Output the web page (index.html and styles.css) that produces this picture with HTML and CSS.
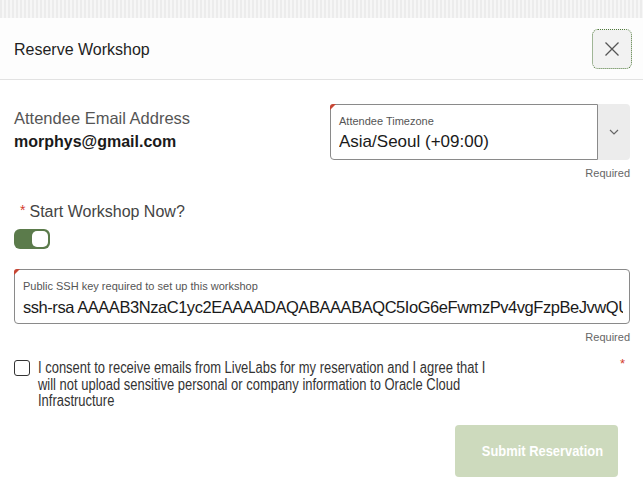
FILE: index.html
```html
<!DOCTYPE html>
<html>
<head>
<meta charset="utf-8">
<link rel="stylesheet" href="styles.css">
</head>
<body>
<div class="backdrop"></div>
<div class="dialog">
  <div class="header">
    <h1 class="title">Reserve Workshop</h1>
    <button class="close" aria-label="Close">
      <svg width="16" height="16" viewBox="0 0 16 16"><path d="M1.5 1.5L14.5 14.5M14.5 1.5L1.5 14.5" stroke="#555" stroke-width="1.3" fill="none"/></svg>
    </button>
  </div>
  <div class="body">
    <div class="row-top">
      <div class="email">
        <div class="email-label">Attendee Email Address</div>
        <div class="email-value">morphys@gmail.com</div>
      </div>
      <div class="tz-wrap">
        <div class="tz">
          <div class="field tz-field">
            <span class="corner"></span>
            <div class="field-label">Attendee Timezone</div>
            <div class="field-value">Asia/Seoul (+09:00)</div>
          </div>
          <div class="tz-btn">
            <svg width="12" height="8" viewBox="0 0 12 8"><path d="M2 2L6 6L10 2" stroke="#666" stroke-width="1.2" fill="none"/></svg>
          </div>
        </div>
        <div class="required">Required</div>
      </div>
    </div>
    <div class="start">
      <div class="start-label"><span class="ast">*</span>Start Workshop Now?</div>
      <div class="toggle"><span class="knob"></span></div>
    </div>
    <div class="ssh">
      <div class="field ssh-field">
        <span class="corner"></span>
        <div class="field-label">Public SSH key required to set up this workshop</div>
        <div class="field-value ssh-value">ssh-rsa AAAAB3NzaC1yc2EAAAADAQABAAABAQC5IoG6eFwmzPv4vgFzpBeJvwQU</div>
      </div>
      <div class="required">Required</div>
    </div>
    <div class="consent">
      <span class="checkbox"></span>
      <p class="consent-text">I consent to receive emails from LiveLabs for my reservation and I agree that I will not upload sensitive personal or company information to Oracle Cloud Infrastructure</p>
      <span class="consent-ast">*</span>
    </div>
    <div class="actions">
      <button class="submit"><span class="submit-text">Submit Reservation</span></button>
    </div>
  </div>
</div>
</body>
</html>
```
FILE: styles.css
```css
html, body {
  margin: 0;
  padding: 0;
  background: #ffffff;
  width: 643px;
  height: 495px;
  overflow: hidden;
  font-family: "Liberation Sans", Arial, sans-serif;
}
.backdrop {
  height: 18px;
  background: repeating-linear-gradient(90deg, #ececec 0 2px, #f6f6f6 2px 4px);
}
.dialog {
  background: #fff;
}
.header {
  height: 61px;
  display: flex;
  align-items: center;
  justify-content: space-between;
  padding: 0 11px 0 14px;
  border-bottom: 1px solid #e2e2e2;
  background: #fdfdfd;
}
.title {
  margin: 0;
  font-size: 16px;
  font-weight: normal;
  color: #1f1f1f;
  padding-top: 2px;
}
.close {
  width: 40px;
  height: 40px;
  border: 1px dotted #4f7a3a;
  border-radius: 6px;
  background: #f2f2f2;
  display: flex;
  align-items: center;
  justify-content: center;
  padding: 0;
  margin-top: 1px;
}
.body {
  padding: 24px 13px 0 14px;
}
.row-top {
  display: flex;
  justify-content: space-between;
}
.email {
  padding-top: 3px;
}
.email-label {
  font-size: 16.5px;
  color: #555;
  line-height: 22px;
}
.email-value {
  font-size: 16px;
  font-weight: bold;
  color: #1a1a1a;
  line-height: 26px;
}
.tz-wrap {
  width: 300px;
}
.tz {
  display: flex;
  height: 56px;
}
.field {
  position: relative;
  border: 1px solid #8a8a8a;
  border-radius: 4px;
  box-sizing: border-box;
  padding: 9px 0 0 8px;
  background: #fff;
}
.tz-field {
  flex: 1;
  border-radius: 4px 0 0 4px;
}
.corner {
  position: absolute;
  left: -1px;
  top: -1px;
  width: 0;
  height: 0;
  border-top: 6px solid #c74634;
  border-right: 6px solid transparent;
  border-top-left-radius: 3px;
}
.field-label {
  font-size: 11px;
  color: #555;
  line-height: 14px;
}
.field-value {
  font-size: 17px;
  color: #1a1a1a;
  line-height: 24px;
  margin-top: 2px;
  white-space: nowrap;
  overflow: hidden;
}
.tz-btn {
  width: 32px;
  background: #ececec;
  border-radius: 0 4px 4px 0;
  display: flex;
  align-items: center;
  justify-content: center;
}
.required {
  text-align: right;
  font-size: 11px;
  color: #666;
  margin-top: 7px;
}
.start {
  margin-top: 23px;
}
.start-label {
  font-size: 16px;
  color: #444;
  padding-left: 6px;
}
.ast {
  color: #d33c2c;
  margin-right: 4px;
  font-size: 14px;
  vertical-align: 2px;
}
.toggle {
  margin-top: 8px;
  width: 36px;
  height: 20px;
  box-sizing: border-box;
  border-radius: 6px;
  background: #5b7b4b;
  position: relative;
}
.knob {
  position: absolute;
  right: 2px;
  top: 2px;
  width: 16px;
  height: 16px;
  border-radius: 5px;
  background: #fff;
}
.ssh {
  margin-top: 20px;
}
.ssh-field {
  height: 55px;
  padding-right: 6px;
}
.ssh-value {
  font-size: 16.5px;
  letter-spacing: -0.45px;
}
.consent {
  margin-top: 17px;
  display: flex;
  align-items: flex-start;
  position: relative;
}
.checkbox {
  flex: none;
  width: 14px;
  height: 14px;
  border: 1.5px solid #333;
  border-radius: 3px;
  margin-top: 0px;
}
.consent-text {
  margin: 0 0 0 8px;
  width: 570px;
  flex: none;
  font-size: 16px;
  line-height: 16.5px;
  color: #333;
  transform: scaleX(0.81);
  transform-origin: left top;
}
.consent-ast {
  position: absolute;
  right: 5px;
  top: -4px;
  color: #d33c2c;
  font-size: 13px;
}
.actions {
  display: flex;
  justify-content: flex-end;
  margin-top: 15px;
  padding-right: 12px;
}
.submit {
  width: 163px;
  height: 52px;
  border: none;
  border-radius: 4px;
  background: #cddabd;
  color: #fff;
  font-family: "Liberation Sans", Arial, sans-serif;
  font-weight: bold;
  font-size: 15px;
  padding: 0 0 0 12px;
}
.submit-text {
  display: inline-block;
  transform: scaleX(0.86);
}
```
